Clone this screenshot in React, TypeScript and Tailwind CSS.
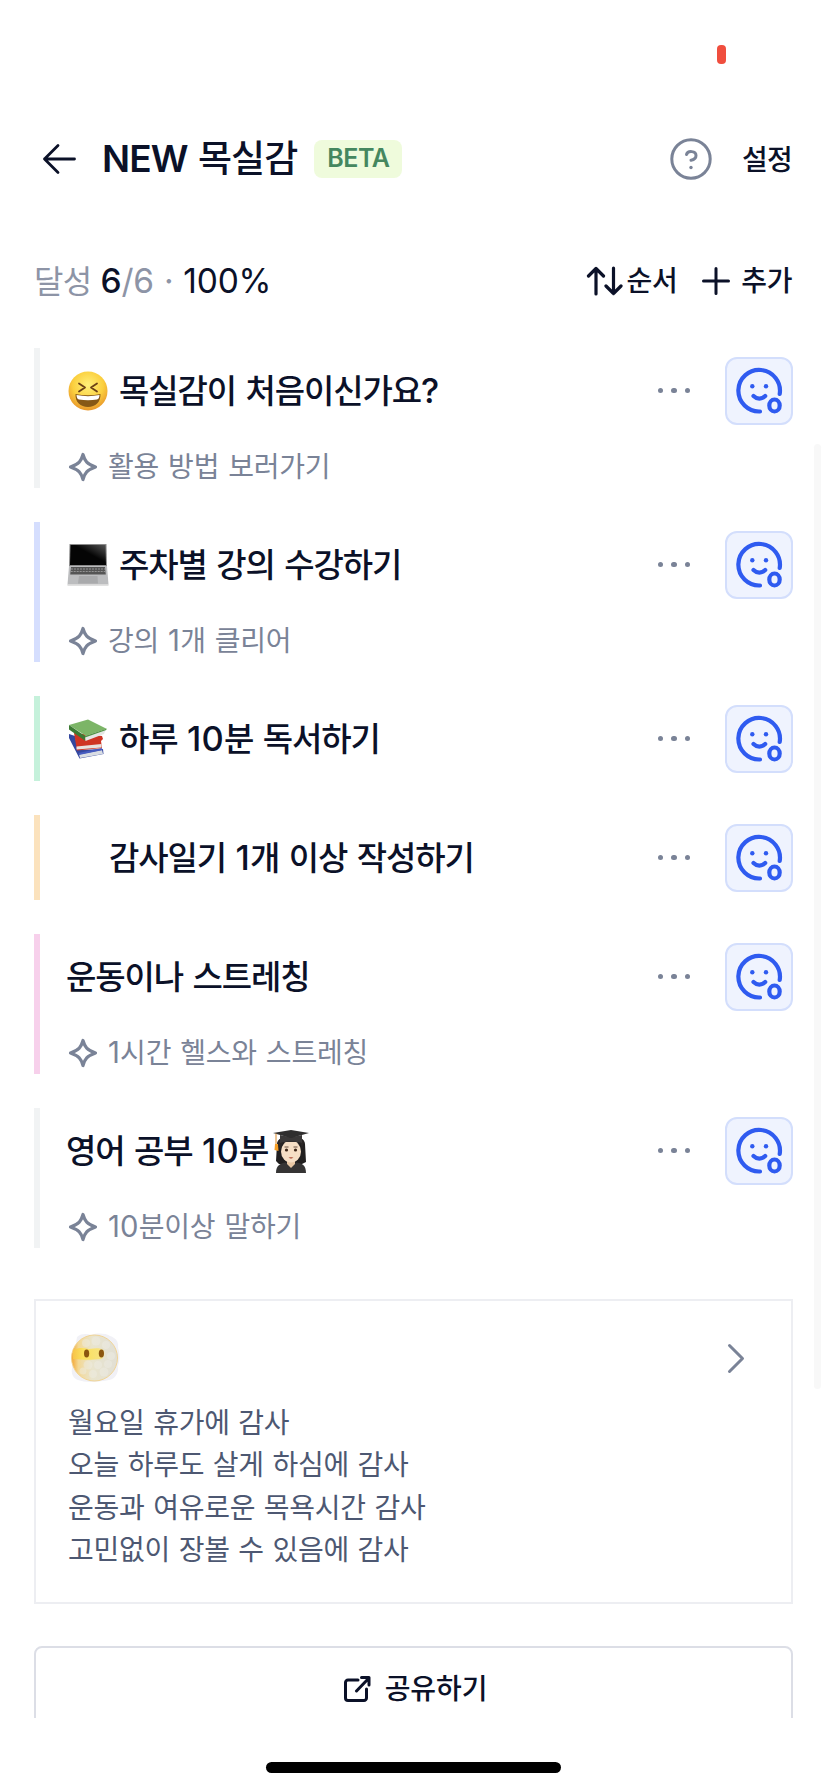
import React from 'react';

type Emoji = 'laugh' | 'laptop' | 'books' | 'blank';

interface Goal {
  bar: string;
  emoji?: Emoji;
  title: string;
  graduate?: boolean;
  note?: string;
}

const goals: Goal[] = [
  { bar: 'bg-[#f1f3f4]', emoji: 'laugh', title: '목실감이 처음이신가요?', note: '활용 방법 보러가기' },
  { bar: 'bg-[#d5defe]', emoji: 'laptop', title: '주차별 강의 수강하기', note: '강의 1개 클리어' },
  { bar: 'bg-[#c5f1db]', emoji: 'books', title: '하루 10분 독서하기' },
  { bar: 'bg-[#fbe2bd]', emoji: 'blank', title: '감사일기 1개 이상 작성하기' },
  { bar: 'bg-[#f7d0eb]', title: '운동이나 스트레칭', note: '1시간 헬스와 스트레칭' },
  { bar: 'bg-[#f1f3f4]', title: '영어 공부 10분', graduate: true, note: '10분이상 말하기' },
];

const thanks = [
  '월요일 휴가에 감사',
  '오늘 하루도 살게 하심에 감사',
  '운동과 여유로운 목욕시간 감사',
  '고민없이 장볼 수 있음에 감사',
];

const LaughEmoji = () => (
  <svg className="w-[42px] h-[42px]" viewBox="0 0 42 42">
    <defs>
      <radialGradient id="laugh" cx="50%" cy="35%" r="65%">
        <stop offset="0" stopColor="#fff07a" />
        <stop offset="0.6" stopColor="#fbcf3e" />
        <stop offset="1" stopColor="#e8962a" />
      </radialGradient>
    </defs>
    <circle cx="21" cy="21" r="19.5" fill="url(#laugh)" />
    <path d="M12 13.5l6 4-6 4M30 13.5l-6 4 6 4" fill="none" stroke="#6b4016" strokeWidth="1.8" strokeLinecap="round" strokeLinejoin="round" />
    <path d="M8.5 24c8 1.6 17 1.6 25 0 .3 8-5 13-12.5 13S8 32 8.5 24z" fill="#875816" />
    <path d="M9.5 25c7.5 1.5 15.5 1.5 23 0-.2 2.7-1 4.2-2.5 4.5-6 1-12 1-18 0-1.5-.3-2.3-1.8-2.5-4.5z" fill="#fff" />
  </svg>
);

const LaptopEmoji = () => (
  <svg className="w-[42px] h-[42px]" viewBox="0 0 42 42">
    <defs>
      <linearGradient id="screen" x1="0" y1="1" x2="1" y2="0">
        <stop offset="0.55" stopColor="#050505" />
        <stop offset="1" stopColor="#555" />
      </linearGradient>
    </defs>
    <path d="M2.5 0h37l.5 22H2z" fill="#8b8b8b" />
    <path d="M3.5 1h35l.5 20H3z" fill="url(#screen)" />
    <path d="M2 22h38l1.5 18.5h-41z" fill="#bcbdbf" />
    <path d="M4 23h34l.8 7.5H3.2z" fill="#555" />
    <path d="M4 25h34M3.7 27.5h34.6" stroke="#a3a3a3" strokeWidth="0.8" strokeDasharray="2 1" />
    <path d="M12 32h18.5l.5 7.5H11z" fill="#a9aaac" />
    <path d="M.5 40.2h41v1.5H.5z" fill="#d7d7d7" />
  </svg>
);

const BooksEmoji = () => (
  <svg className="w-[42px] h-[42px]" viewBox="0 0 42 42">
    <path d="M2 16l6 2 3 14 25-1 .5 5-24 4.500L2 20z" fill="#34479f" />
    <path d="M12 36.500l23-4.500 1 4-23 4z" fill="#d9dde3" />
    <path d="M11.500 35l23-5 1.500 2-24 5z" fill="#465bc0" />
    <path d="M7 15l28 3 1 3-2 2 1 7-25 2.500z" fill="#cf3423" />
    <path d="M9.500 28.500l25-2.500v3.500l-25 2z" fill="#e7e2df" />
    <path d="M2 7L21 1.500 40 11l-21 7z" fill="#7cb567" />
    <path d="M2 7l16 11 .5 5L2 11.500z" fill="#3b7a33" />
    <path d="M18 18L39 11l-2 5-18.500 7z" fill="#e4e7e4" />
    <path d="M18 18L39.500 10.800l-.3 1.200L18 19.500z" fill="#4f9342" />
  </svg>
);

const GraduateEmoji = () => (
  <svg className="w-[36px] h-[43px]" viewBox="0 0 36 43">
    <path d="M4 14c0-5 6-8 14-8s14 3 14 8l1 18-4 2H6l-3-3z" fill="#211f1f" />
    <path d="M3 43c0-8 5-10 10-10.5l5 3 5-3C29 33 33 35 33 43z" fill="#353434" />
    <path d="M14 30h8v4l-4 4-4-4z" fill="#e8c7a4" />
    <ellipse cx="18" cy="21.5" rx="10" ry="11" fill="#f6dfc5" />
    <path d="M7 20c2-4 3-7 4-8h15c2 2 3 5 3 8l2-9-13-4-13 4z" fill="#2a2625" />
    <path d="M7 5l11 2.5L29 5v8c-6-2-16-2-22 0z" fill="#3a3838" />
    <path d="M0 3l18-3 18 3-18 5z" fill="#2f2e2e" />
    <path d="M3 3.5v12" stroke="#d98a2b" strokeWidth="1" />
    <path d="M2 14h3l.5 7-4-1z" fill="#f59d24" />
    <circle cx="13.5" cy="20" r="1.6" fill="#3b2516" />
    <circle cx="22.5" cy="20" r="1.6" fill="#3b2516" />
    <path d="M11.5 17h4M20.5 17h4" stroke="#5a4232" strokeWidth="0.9" />
    <path d="M15.5 27.5c1.6-.8 3.4-.8 5 0-1.5 1.5-3.5 1.5-5 0z" fill="#b9654f" />
  </svg>
);

const CloudFaceEmoji = () => (
  <svg className="w-[50px] h-[50px]" viewBox="0 0 50 50">
    <defs>
      <linearGradient id="haze" x1="0" y1="0" x2="1" y2="0">
        <stop offset="0" stopColor="#f4a531" />
        <stop offset="0.15" stopColor="#f3d894" />
        <stop offset="0.45" stopColor="#e9e4cd" />
        <stop offset="1" stopColor="#e1dfd5" />
      </linearGradient>
      <linearGradient id="band" x1="0" y1="0" x2="1" y2="0">
        <stop offset="0" stopColor="#f7c54a" />
        <stop offset="0.3" stopColor="#fbe05c" />
        <stop offset="0.85" stopColor="#f8e27c" />
        <stop offset="1" stopColor="#e9e4cd" />
      </linearGradient>
    </defs>
    <path d="M7 4c5-4 10-3 14-2 6-2 14-2 19 1 6 2 9 6 8 12 2 5 2 12 0 18 1 7-3 13-9 14-8 2-24 3-31 0-5-2-7-6-6-12z" fill="#f1f1f6" />
    <circle cx="24.5" cy="25" r="23" fill="url(#haze)" stroke="#f0d18c" strokeWidth="0.9" />
    <path d="M3 17c6-3 11-2 16-1 7-1 12-1 15 1 2 3 1 7-2 9-9 1-20 1-29 0z" fill="url(#band)" />
    <g fill="#efeee6" opacity="0.45">
      <circle cx="16" cy="10" r="4" />
      <circle cx="26" cy="8" r="4.5" />
      <circle cx="36" cy="12" r="4" />
      <circle cx="41" cy="23" r="4" />
      <circle cx="38" cy="31" r="4" />
      <circle cx="18" cy="32" r="4.5" />
      <circle cx="28" cy="32" r="4" />
      <circle cx="34" cy="39" r="4.5" />
      <circle cx="23" cy="41" r="4" />
      <circle cx="13" cy="38" r="3.5" />
    </g>
    <ellipse cx="16.6" cy="20.5" rx="2.6" ry="4" fill="#8b560f" />
    <ellipse cx="31.4" cy="20.5" rx="2.6" ry="4" fill="#8b560f" />
  </svg>
);

const TitleEmoji: React.FC<{ name: Emoji }> = ({ name }) => (
  <span className={name === 'blank' ? 'w-[42px] ml-[1px] shrink-0' : 'w-[42px] ml-[1px] mr-[10px] shrink-0'}>
    {name === 'laugh' && <LaughEmoji />}
    {name === 'laptop' && <LaptopEmoji />}
    {name === 'books' && <BooksEmoji />}
  </span>
);

// 숫자와 물음표는 한글보다 조금 크게, 자간도 넓게
const MixedText: React.FC<{ text: string }> = ({ text }) => (
  <span className="whitespace-pre">
    {text.split(/(\d+|\?)/).map((part, i) =>
      /^[\d?]/.test(part) ? (
        <span key={i} className="text-[1.045em] tracking-[0.2px]">{part}</span>
      ) : (
        part
      )
    )}
  </span>
);

const SparkleIcon = () => (
  <svg className="w-[30px] h-[30px] shrink-0" viewBox="0 0 30 30" fill="none" stroke="#7a8397" strokeWidth="3.2" strokeLinejoin="round">
    <path d="M15 2.5c1.8 6.5 4 9.5 12.5 12.5-8.500 3-10.700 6-12.500 12.500C13.200 21 11 18 2.500 15 11 12 13.200 9 15 2.500z" />
  </svg>
);

const MoodButton = () => (
  <button className="w-[68px] h-[68px] rounded-[12px] border-2 border-[#d3defc] bg-[#eff3fe] shrink-0">
    <svg className="w-16 h-16" viewBox="0 0 64 64" fill="none" stroke="#2f5bf0" strokeWidth="4.2" strokeLinecap="round">
      <path d="M33 52.5A20.8 20.8 0 1 1 52.7 35" />
      <path d="M26.5 37c3.4 3.4 8.3 3.4 11.7 0" />
      <ellipse cx="47.5" cy="46.5" rx="5.2" ry="6" />
      <circle cx="25.3" cy="27.3" r="2.2" fill="#2f5bf0" stroke="none" />
      <circle cx="39" cy="27.3" r="2.2" fill="#2f5bf0" stroke="none" />
    </svg>
  </button>
);

const GoalRow: React.FC<{ goal: Goal }> = ({ goal }) => (
  <div className="flex">
    <div className={`w-[6px] shrink-0 ${goal.bar}`} />
    <div className="flex-1 pl-[26px]">
      <div className="flex items-center h-[85px]">
        <h2 className="flex flex-1 items-center pt-[1px] whitespace-nowrap text-[33px] leading-[40px] font-medium tracking-[-1.1px] [word-spacing:1.8px]">
          {goal.emoji && <TitleEmoji name={goal.emoji} />}
          <MixedText text={goal.title} />
          {goal.graduate && <span className="ml-[5px]"><GraduateEmoji /></span>}
        </h2>
        <button className="flex items-center gap-[8px] mr-[35px]">
          <span className="w-[5.5px] h-[5.5px] rounded-full bg-[#7a8397]" />
          <span className="w-[5.5px] h-[5.5px] rounded-full bg-[#7a8397]" />
          <span className="w-[5.5px] h-[5.5px] rounded-full bg-[#7a8397]" />
        </button>
        <MoodButton />
      </div>
      {goal.note && (
        <div className="flex items-center h-[55px] pt-[13px] pl-[2px] text-[28px] leading-[36px] tracking-[-0.2px] [word-spacing:1.3px] text-[#7a8397]">
          <SparkleIcon />
          <span className="ml-[10px]"><MixedText text={goal.note} /></span>
        </div>
      )}
    </div>
  </div>
);

export default function App() {
  return (
    <div className="relative w-[827px] h-[1790px] overflow-hidden bg-white text-[#0b1128] font-['Inter','Noto_Sans_CJK_KR',sans-serif]">
      {/* 녹화 표시 */}
      <div className="flex justify-end h-[116px] pt-[45px] pr-[101px]">
        <span className="w-[9px] h-[19px] rounded-[4px] bg-[#f04e3e]" />
      </div>

      {/* 헤더 */}
      <header className="flex items-center h-[85px] pl-[42px] pr-[35px]">
        <svg className="w-[35px] h-[32px]" viewBox="0 0 35 32" fill="none" stroke="currentColor" strokeWidth="2.8" strokeLinecap="round" strokeLinejoin="round">
          <path d="M32.5 16H2.5M16 2.5L2.5 16 16 29.5" />
        </svg>
        <h1 className="ml-[25px] text-[37px] font-semibold tracking-[-0.9px] [word-spacing:2px] whitespace-nowrap">NEW <span className="font-medium">목실감</span></h1>
        <span className="flex items-center justify-center ml-[17px] mt-[1px] w-[88px] h-[38px] rounded-[8px] bg-[#effbdc] text-[25px] font-semibold text-[#45875f] tracking-[-0.5px]">BETA</span>
        <svg className="ml-auto w-[42px] h-[42px]" viewBox="0 0 42 42" fill="none" stroke="#7a8397" strokeWidth="3" strokeLinecap="round">
          <circle cx="21" cy="21" r="19.2" />
          <path d="M16.5 16.5c1.2-4.2 9.5-3.8 9.5 1 0 3.2-2.5 4.3-5 4.8" />
          <circle cx="21" cy="29.5" r="1.7" fill="#7a8397" stroke="none" />
        </svg>
        <button className="ml-[30px] pt-[2px] text-[28px] font-medium tracking-[-0.8px]">설정</button>
      </header>

      {/* 달성률 */}
      <section className="flex items-center h-[80px] mt-[40px] px-[34px] pr-[35px] whitespace-nowrap">
        <p className="text-[33.5px] tracking-[-0.2px] text-[#8d94a6]">
          <span className="text-[32px] tracking-[-0.8px]">달성</span> <span className="font-medium text-[#0b1128]">6</span>/6<span className="mx-[10px]">·</span><span className="text-[#0b1128]">100%</span>
        </p>
        <button className="flex items-center ml-auto text-[28px] font-medium tracking-[-0.4px]">
          <svg className="w-[37px] h-[30px] mr-[4px]" viewBox="0 0 37 30" fill="none" stroke="currentColor" strokeWidth="3.2" strokeLinecap="round" strokeLinejoin="round">
            <path d="M10 28V2.5M2.5 10L10 2.5 17.5 10M27.5 2v25.5M20 20l7.5 7.5L35 20" />
          </svg>
          순서
        </button>
        <button className="flex items-center ml-[25px] text-[28px] font-medium tracking-[-0.4px]">
          <svg className="w-[28px] h-[28px] mr-[11px]" viewBox="0 0 28 28" fill="none" stroke="currentColor" strokeWidth="3" strokeLinecap="round">
            <path d="M14 1.5v25M1.5 14h25" />
          </svg>
          추가
        </button>
      </section>

      <main className="flex flex-col gap-[34px] mt-[27px] px-[34px]">
        {goals.map((goal) => (
          <GoalRow key={goal.title} goal={goal} />
        ))}
      </main>

      {/* 감사일기 */}
      <section className="mx-[34px] mt-[51px] h-[305px] border-2 border-[#edeef2] px-[31px] pt-[32px]">
        <div className="flex items-center justify-between pl-[3px] pr-[15px]">
          <CloudFaceEmoji />
          <svg className="w-[18px] h-[31px]" viewBox="0 0 18 31" fill="none" stroke="#7a8397" strokeWidth="3" strokeLinecap="round" strokeLinejoin="round">
            <path d="M2.5 2.5l13 13-13 13" />
          </svg>
        </div>
        <div className="mt-[19px] pl-[1px] text-[28px] leading-[42.4px] tracking-[-0.25px] [word-spacing:1px] text-[#4d5872]">
          {thanks.map((line) => (
            <p key={line}>{line}</p>
          ))}
        </div>
      </section>

      {/* 공유 */}
      <div className="h-[72px] mt-[42px] mx-[34px] overflow-hidden">
        <button className="flex items-center justify-center w-full h-[86px] pl-[3px] rounded-[8px] border-2 border-[#dcdee6] text-[28px] font-medium tracking-[-0.1px]">
          <svg className="w-[28px] h-[28px] mr-[14px]" viewBox="0 0 28 28" fill="none" stroke="currentColor" strokeWidth="3" strokeLinecap="round" strokeLinejoin="round">
            <path d="M15 5H5a2.5 2.5 0 0 0-2.5 2.5V23A2.5 2.5 0 0 0 5 25.5h16a2.5 2.5 0 0 0 2.5-2.5V14" />
            <path d="M13.5 16L26 3M18.5 2.5h7.5V10" />
          </svg>
          공유하기
        </button>
      </div>

      <div className="mx-auto mt-[44px] w-[295px] h-[11px] rounded-full bg-black" />

      {/* 스크롤바 */}
      <div className="absolute right-[6px] top-[444px] w-[7px] h-[945px] rounded-full bg-[#f8f8f8]" />
    </div>
  );
}
